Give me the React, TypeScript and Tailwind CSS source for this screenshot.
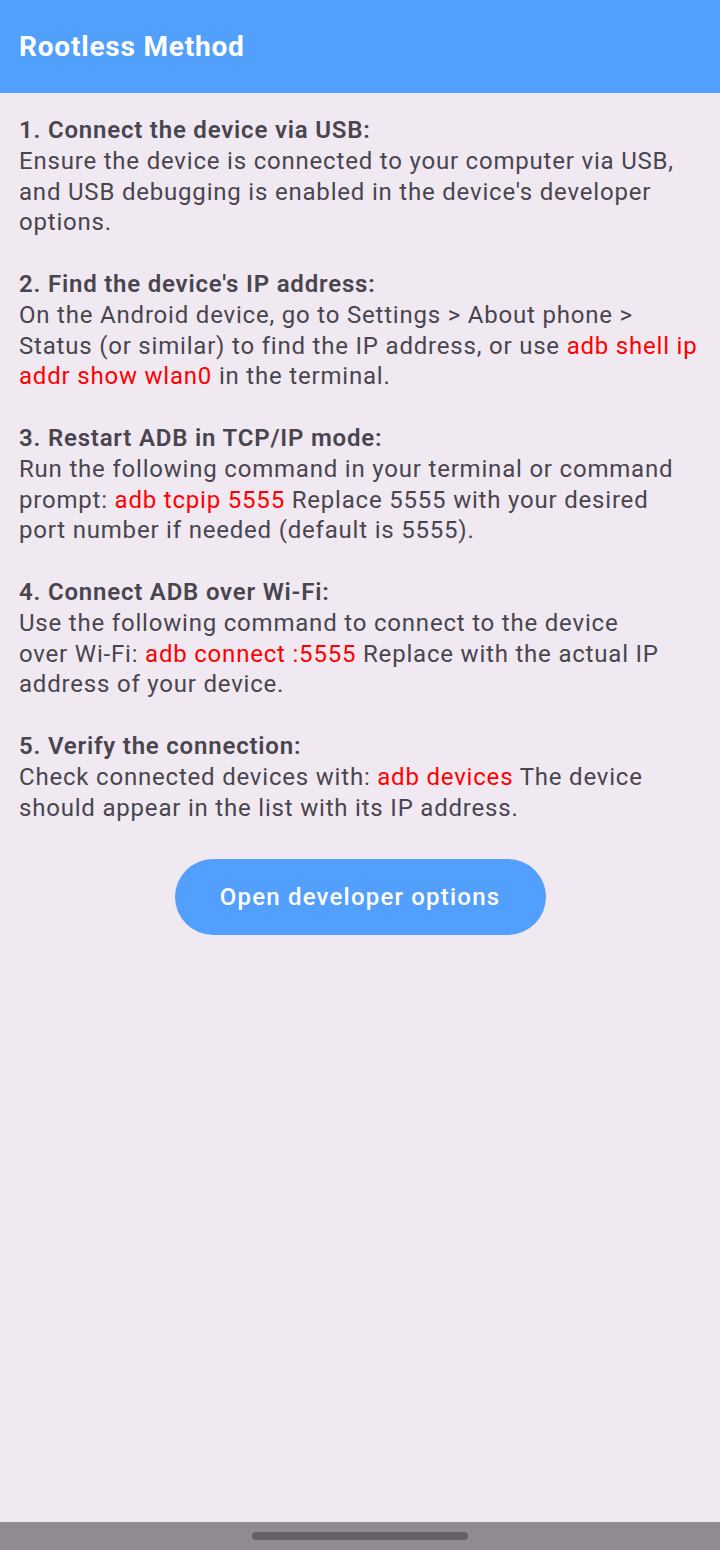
import React from "react";

const R = ({ children }: { children: React.ReactNode }) => (
  <span className="text-[#ff0000]">{children}</span>
);

export default function App() {
  const sections: { title: string; lines: React.ReactNode[] }[] = [
    {
      title: "1. Connect the device via USB:",
      lines: [
        "Ensure the device is connected to your computer via USB,",
        "and USB debugging is enabled in the device's developer",
        "options.",
      ],
    },
    {
      title: "2. Find the device's IP address:",
      lines: [
        "On the Android device, go to Settings > About phone >",
        <>
          Status (or similar) to find the IP address, or use <R>adb shell ip</R>
        </>,
        <>
          <R>addr show wlan0</R> in the terminal.
        </>,
      ],
    },
    {
      title: "3. Restart ADB in TCP/IP mode:",
      lines: [
        "Run the following command in your terminal or command",
        <>
          prompt: <R>adb tcpip 5555</R> Replace 5555 with your desired
        </>,
        "port number if needed (default is 5555).",
      ],
    },
    {
      title: "4. Connect ADB over Wi-Fi:",
      lines: [
        "Use the following command to connect to the device",
        <>
          over Wi-Fi: <R>adb connect :5555</R> Replace with the actual IP
        </>,
        "address of your device.",
      ],
    },
    {
      title: "5. Verify the connection:",
      lines: [
        <>
          Check connected devices with: <R>adb devices</R> The device
        </>,
        "should appear in the list with its IP address.",
      ],
    },
  ];

  return (
    <div
      className="w-[720px] h-[1550px] flex flex-col bg-[#f0e9f2]"
      style={{ fontFamily: "Roboto, 'Noto Sans', sans-serif" }}
    >
      <div className="h-[93px] bg-[#52a0fe] flex items-center px-[19px] shrink-0">
        <span className="text-white font-bold text-[28px] tracking-[0.8px] leading-none">Rootless Method</span>
      </div>
      <div className="flex-1 flex flex-col pl-[19px] pr-[4px]">
        <div className="pt-[22px] flex flex-col gap-[30.8px] text-[24px] tracking-[0.8px] leading-[30.8px] text-[#49454f]">
          {sections.map((s) => (
            <div key={s.title} className="flex flex-col">
              <div className="font-semibold whitespace-nowrap">{s.title}</div>
              {s.lines.map((l, i) => (
                <div key={i} className="whitespace-nowrap">
                  {l}
                </div>
              ))}
            </div>
          ))}
        </div>
        <div className="flex justify-center mt-[36px] pr-[15px]">
          <button className="w-[371px] h-[76px] rounded-full bg-[#539ffd] text-white text-[24px] tracking-[1.2px] font-medium">
            Open developer options
          </button>
        </div>
      </div>
      <div className="h-[28px] bg-[#8f8b91] flex items-center justify-center shrink-0">
        <div className="w-[216px] h-[8px] rounded-full bg-[#646165]" />
      </div>
    </div>
  );
}
